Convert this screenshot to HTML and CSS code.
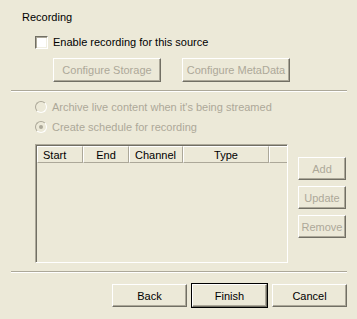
FILE: index.html
```html
<!DOCTYPE html>
<html lang="en">
<head>
    <meta charset="UTF-8">
    <title>Recording</title>
    <link rel="stylesheet" href="styles.css">
</head>
<body>
    <div class="dialog">
        <div class="title">Recording</div>

        <label class="check-row">
            <span class="checkbox"></span>
            <span>Enable recording for this source</span>
        </label>

        <div class="config-row">
            <button class="btn btn-config" disabled>Configure Storage</button>
            <button class="btn btn-config" disabled>Configure MetaData</button>
        </div>

        <div class="separator"></div>

        <div class="radio-row disabled">
            <span class="radio"></span>
            <span>Archive live content when it's being streamed</span>
        </div>
        <div class="radio-row disabled">
            <span class="radio checked"></span>
            <span>Create schedule for recording</span>
        </div>

        <div class="schedule">
            <div class="list">
                <div class="list-header">
                    <span class="col col-start">Start</span>
                    <span class="col col-end">End</span>
                    <span class="col col-channel">Channel</span>
                    <span class="col col-type">Type</span>
                    <span class="col col-rest"></span>
                </div>
            </div>
            <div class="side-buttons">
                <button class="btn btn-side" disabled>Add</button>
                <button class="btn btn-side" disabled>Update</button>
                <button class="btn btn-side" disabled>Remove</button>
            </div>
        </div>

        <div class="separator bottom"></div>

        <div class="footer-buttons">
            <button class="btn btn-nav">Back</button>
            <button class="btn btn-nav default">Finish</button>
            <button class="btn btn-nav">Cancel</button>
        </div>
    </div>
</body>
</html>
```

FILE: styles.css
```css
body {
    margin: 0;
    background-color: #ece9d8;
    font-family: "Liberation Sans", Arial, sans-serif;
    font-size: 11px;
    color: #000;
}
.dialog {
    width: 357px;
    height: 319px;
    padding-top: 10px;
    box-sizing: border-box;
}
.title {
    margin-left: 22px;
    height: 14px;
    line-height: 14px;
}
.check-row {
    display: flex;
    align-items: center;
    gap: 5px;
    margin: 11px 0 0 35px;
    height: 14px;
}
.checkbox {
    width: 11px;
    height: 11px;
    background: #fff;
    border-top: 1px solid #716f64;
    border-left: 1px solid #716f64;
    border-right: 1px solid #fff;
    border-bottom: 1px solid #fff;
    box-shadow: inset 1px 1px 0 #aca899, inset -1px -1px 0 #f1efe2;
}
.config-row {
    display: flex;
    gap: 21px;
    margin: 9px 0 0 53px;
}
.btn {
    font-family: inherit;
    font-size: 11px;
    white-space: nowrap;
    background: #ece9d8;
    color: #000;
    border-top: 1px solid #fff;
    border-left: 1px solid #fff;
    border-right: 1px solid #716f64;
    border-bottom: 1px solid #716f64;
    box-shadow: inset -1px -1px 0 #aca899;
    padding: 0;
    height: 23px;
}
.btn:disabled {
    color: #aca899;
}
.btn-config {
    width: 108px;
    height: 24px;
}
.separator {
    margin: 8px 10px 0 11px;
    height: 0;
    border-top: 1px solid #aca899;
    border-bottom: 1px solid #fff;
}
.radio-row {
    display: flex;
    align-items: center;
    gap: 5px;
    margin: 9px 0 0 35px;
    height: 12px;
}
.radio-row + .radio-row {
    margin-top: 8px;
}
.radio-row.disabled {
    color: #aca899;
}
.radio {
    position: relative;
    width: 10px;
    height: 10px;
    border-radius: 50%;
    border: 1px solid;
    border-color: #aca899 #fff #fff #aca899;
    background: #ece9d8;
}
.radio.checked::after {
    content: "";
    position: absolute;
    left: 3px;
    top: 3px;
    width: 4px;
    height: 4px;
    border-radius: 50%;
    background: #aca899;
}
.schedule {
    display: flex;
    align-items: flex-start;
    gap: 10px;
    margin: 11px 0 0 35px;
}
.list {
    width: 250px;
    height: 116px;
    border-top: 1px solid #aca899;
    border-left: 1px solid #aca899;
    border-right: 1px solid #fff;
    border-bottom: 1px solid #fff;
    box-shadow: inset 1px 1px 0 #716f64;
    padding: 1px 0 0 1px;
    box-sizing: content-box;
}
.list-header {
    display: flex;
    height: 17px;
}
.col {
    box-sizing: border-box;
    line-height: 16px;
    padding-left: 5px;
    border-top: 1px solid #fff;
    border-left: 1px solid #fff;
    border-right: 1px solid #aca899;
    border-bottom: 1px solid #aca899;
}
.col-start { width: 46px; }
.col-end { width: 46px; text-align: center; padding-left: 0; }
.col-channel { width: 54px; }
.col-type { width: 86px; text-align: center; padding-left: 0; }
.col-rest { width: 18px; border-right: none; }
.side-buttons {
    display: flex;
    flex-direction: column;
    gap: 6px;
    margin-top: 13px;
}
.btn-side {
    width: 48px;
}
.separator.bottom {
    margin-top: 8px;
}
.footer-buttons {
    display: flex;
    justify-content: flex-end;
    gap: 5px;
    margin: 11px 10px 0 0;
}
.btn-nav {
    width: 75px;
    height: 23px;
}
.btn-nav.default {
    outline: 1px solid #000;
    outline-offset: 0;
}
```
